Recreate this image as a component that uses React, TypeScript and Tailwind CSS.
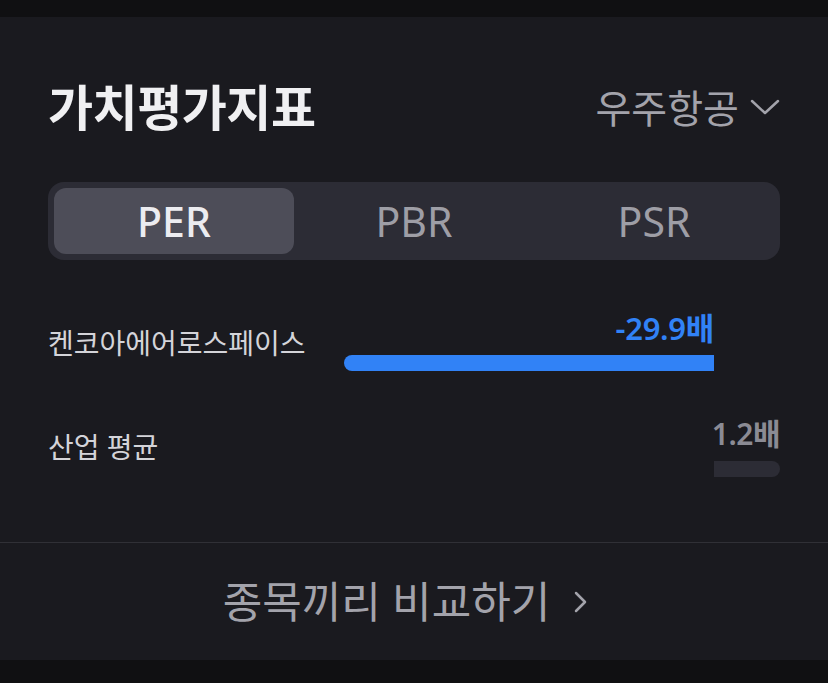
import React from "react";

const tabs = ["PER", "PBR", "PSR"];

const ChevronDown = () => (
  <svg width="30" height="16" viewBox="0 0 30 16" fill="none" aria-hidden="true">
    <path
      d="M2 2 L15 14 L28 2"
      stroke="currentColor"
      strokeWidth="2.5"
      strokeLinecap="round"
      strokeLinejoin="round"
    />
  </svg>
);

const ChevronRight = () => (
  <svg width="14" height="22" viewBox="0 0 14 22" fill="none" aria-hidden="true">
    <path
      d="M2 2 L11 11 L2 20"
      stroke="currentColor"
      strokeWidth="2.5"
      strokeLinecap="round"
      strokeLinejoin="round"
    />
  </svg>
);

export default function App() {
  return (
    <div className="w-full h-[683px] flex flex-col bg-[#101012] font-['Noto_Sans','Noto_Sans_CJK_KR',sans-serif]">
      <div className="h-[17px] shrink-0" />
      <div className="flex-1 bg-[#1a1a1f] flex flex-col">
        <div className="px-[48px] pt-[60px]">
          {/* header */}
          <div className="h-[60px] flex items-center justify-between">
            <h2 className="text-[49px] leading-none font-bold text-[#f0f0f2] tracking-[-0.5px]">
              가치평가지표
            </h2>
            <button className="flex items-center gap-[11px] text-[#a3a3ab]">
              <span className="text-[39px] leading-none">우주항공</span>
              <ChevronDown />
            </button>
          </div>

          {/* segmented control */}
          <div className="mt-[45px] h-[78px] p-[6px] flex rounded-[16px] bg-[#2c2c35]">
            {tabs.map((t, i) =>
              i === 0 ? (
                <div
                  key={t}
                  className="flex-1 flex items-center justify-center rounded-[12px] bg-[#4d4d58] text-[#ececf0] text-[41px] font-medium leading-none"
                >
                  {t}
                </div>
              ) : (
                <div
                  key={t}
                  className="flex-1 flex items-center justify-center text-[#9e9ea6] text-[41px] leading-none"
                >
                  {t}
                </div>
              )
            )}
          </div>

          {/* company row */}
          <div className="mt-[50px] flex items-center justify-between">
            <span className="pt-[5px] text-[28px] leading-none text-[#d4d4d9]">
              켄코아에어로스페이스
            </span>
            <div className="flex w-[436px]">
              <div className="w-[370px] flex flex-col">
                <span className="h-[36px] flex justify-end text-[31px] leading-[36px] font-semibold text-[#3182f6] whitespace-nowrap tracking-[-0.3px]">
                  -29.9배
                </span>
                <div className="mt-[9px] h-[16px] rounded-l-full bg-[#3182f6]" />
              </div>
              <div className="w-[66px]" />
            </div>
          </div>

          {/* industry average row */}
          <div className="mt-[45px] flex items-center justify-between">
            <span className="text-[28px] leading-none text-[#d4d4d9]">산업 평균</span>
            <div className="flex w-[436px]">
              <div className="w-[370px]" />
              <div className="w-[66px] flex flex-col">
                <span className="h-[36px] flex justify-end text-[30px] leading-[36px] font-semibold text-[#8b8b94] whitespace-nowrap tracking-[-0.5px]">
                  1.2배
                </span>
                <div className="mt-[9px] h-[16px] rounded-r-full bg-[#2c2c35]" />
              </div>
            </div>
          </div>
        </div>

        <div className="mt-[65px] h-px bg-[#303036]" />

        <button className="h-[117px] flex items-center justify-center pr-[17px] text-[#a3a3ab]">
          <span className="text-[43px] leading-none">종목끼리 비교하기</span>
          <span className="ml-[24px] flex">
            <ChevronRight />
          </span>
        </button>
      </div>
      <div className="h-[23px] shrink-0" />
    </div>
  );
}
